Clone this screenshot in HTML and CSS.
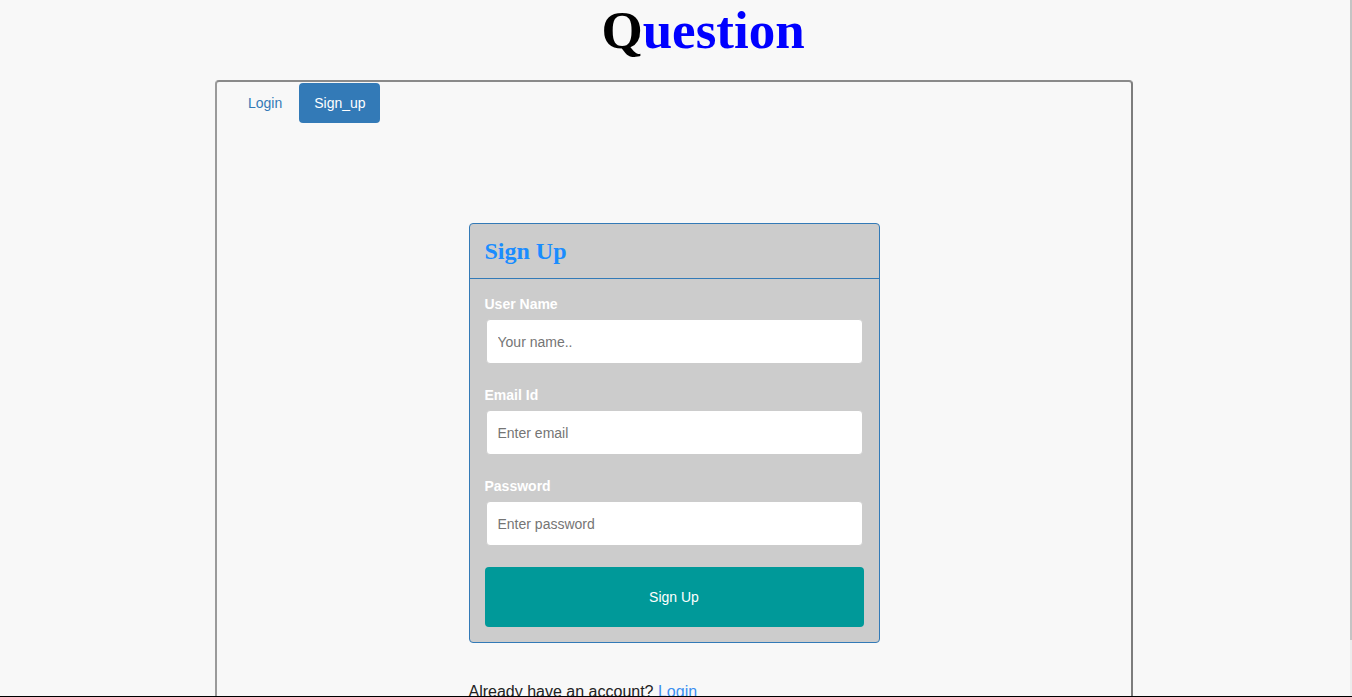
FILE: index.html
```html
<!DOCTYPE html>
<html lang="en">
<head>
<meta charset="utf-8">
<title>Question</title>
<link rel="stylesheet" href="styles.css">
</head>
<body>
<div class="page">
  <h1 class="title"><span class="title-q">Q</span>uestion</h1>
  <div class="panel">
    <ul class="tabs">
      <li class="tab"><a href="#">Login</a></li>
      <li class="tab active"><a href="#">Sign_up</a></li>
    </ul>
    <div class="content">
      <div class="card">
        <div class="card-head"><h3>Sign Up</h3></div>
        <form class="card-body">
          <div class="field">
            <label>User Name</label>
            <input type="text" placeholder="Your name..">
          </div>
          <div class="field">
            <label>Email Id</label>
            <input type="email" placeholder="Enter email">
          </div>
          <div class="field">
            <label>Password</label>
            <input type="password" placeholder="Enter password">
          </div>
          <button type="button" class="submit">Sign Up</button>
        </form>
      </div>
      <p class="already">Already have an account? <a href="#">Login</a></p>
    </div>
  </div>
</div>
<div class="scrollbar"><div class="thumb"></div></div>
<div class="bottom-line"></div>
</body>
</html>
```

FILE: styles.css
```css
html, body {
  margin: 0;
  padding: 0;
  background: #f8f8f8;
}
body {
  font-family: "Liberation Sans", Arial, sans-serif;
  font-size: 14px;
  color: #333;
}
.page {
  width: 1348px;
}
.title {
  margin: 0;
  height: 80px;
  padding-left: 58px;
  text-align: center;
  font-family: "Liberation Serif", "Times New Roman", serif;
  font-weight: bold;
  font-size: 53px;
  line-height: 61px;
  color: #0000ff;
}
.title-q {
  color: #000;
}
.panel {
  width: 918px;
  height: 700px;
  box-sizing: border-box;
  margin: 0 auto;
  border: 2px solid #7d7d7d;
  border-left-color: #9a9a9a;
  border-top-color: #8a8a8a;
  border-radius: 4px;
  padding: 1px 16px 0;
}
.tabs {
  list-style: none;
  margin: 0;
  padding: 0;
  display: flex;
}
.tab + .tab {
  margin-left: 2px;
}
.tab a {
  display: block;
  padding: 10px 15px;
  line-height: 20px;
  font-size: 14px;
  color: #337ab7;
  text-decoration: none;
  border-radius: 4px;
}
.tab.active a {
  background: #337ab7;
  color: #fff;
  padding-right: 14px;
}
.content {
  padding-top: 100px;
  display: flex;
  flex-direction: column;
  align-items: center;
}
.card {
  width: 411px;
  box-sizing: border-box;
  border: 1px solid #337ab7;
  border-radius: 4px;
  background: #cccccc;
}
.card-head {
  height: 54px;
  border-bottom: 1px solid #337ab7;
  display: flex;
  align-items: center;
  padding: 0 15px;
}
.card-head h3 {
  margin: 0;
  font-family: "Liberation Serif", "Times New Roman", serif;
  font-weight: bold;
  font-size: 24px;
  line-height: 26px;
  color: #1a8cff;
}
.card-body {
  padding: 15px;
  display: flex;
  flex-direction: column;
  gap: 21px;
}
.field {
  display: flex;
  flex-direction: column;
  gap: 5px;
}
.field label {
  font-weight: bold;
  font-size: 14px;
  line-height: 20px;
  color: #fff;
}
.field input {
  height: 45px;
  box-sizing: border-box;
  border: 1px solid #ccc;
  border-radius: 4px;
  background: #fff;
  padding: 0 11px;
  margin: 0 1px;
  font-family: "Liberation Sans", Arial, sans-serif;
  font-size: 14px;
  color: #333;
}
.field input::placeholder {
  color: #757575;
}
.submit {
  height: 60px;
  border: none;
  border-radius: 4px;
  background: #009999;
  color: #fff;
  font-family: "Liberation Sans", Arial, sans-serif;
  font-size: 14px;
}
.already {
  width: 411px;
  margin: 38px 0 0;
  font-size: 16px;
  line-height: 22px;
  color: #222;
}
.already a {
  color: #3b8ff0;
  text-decoration: none;
}
.scrollbar {
  position: fixed;
  top: 0;
  right: 0;
  width: 2px;
  height: 697px;
  background: #ececec;
}
.thumb {
  height: 640px;
  background: #c4c4c4;
}
.bottom-line {
  position: fixed;
  left: 0;
  right: 0;
  bottom: 0;
  height: 1px;
  background: #000;
}
```
